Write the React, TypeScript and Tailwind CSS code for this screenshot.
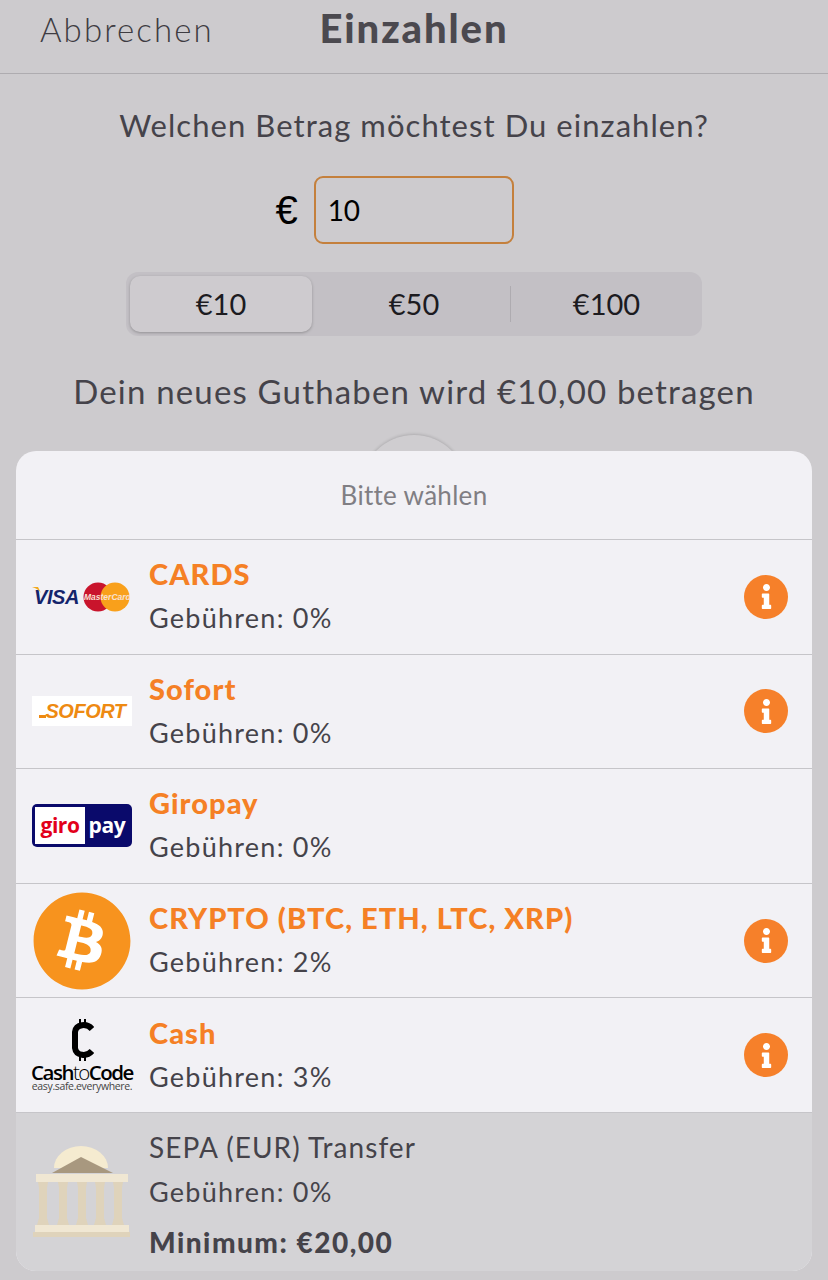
import { FaBitcoin, FaInfo } from "react-icons/fa";

const font = { fontFamily: "Lato, 'Noto Sans', sans-serif" };

const InfoButton = () => (
  <div className="w-[44px] h-[44px] rounded-full bg-[#f6802a] flex items-center justify-center shrink-0">
    <FaInfo size={25} color="#ffffff" />
  </div>
);

const CardsLogo = () => (
  <div className="flex items-center w-[100px] justify-center">
    <span className="relative font-['Liberation_Sans'] font-bold italic text-[20px] leading-none text-[#14246b] tracking-[-0.4px]">
      VISA
      <svg width="9" height="6" viewBox="0 0 9 6" className="absolute left-[-2px] top-[0px]">
        <path d="M0 0H6L9 6C7 3 4 1 0 0Z" fill="#f2a91c" />
      </svg>
    </span>
    <svg width="47" height="30" viewBox="0 0 47 30" className="ml-[4px]">
      <circle cx="15" cy="15" r="14.5" fill="#c9142c" />
      <circle cx="32" cy="15" r="14.5" fill="#f9a01b" />
      <text x="1" y="18" fontSize="8.5" fontStyle="italic" fontWeight="700" fill="#f9e0d0" fontFamily="Liberation Sans">MasterCard</text>
    </svg>
  </div>
);

const SofortLogo = () => (
  <div className="w-[100px] h-[30px] bg-white flex items-center justify-center">
    <div className="w-[7px] h-[3px] bg-[#ee8a12] self-end mb-[8px]" />
    <span className="font-['Liberation_Sans'] font-bold italic text-[20px] leading-none text-[#ee8a12] tracking-[-0.5px]">SOFORT</span>
  </div>
);

const GiropayLogo = () => (
  <div className="w-[100px] h-[43px] rounded-[5px] bg-[#0a0a6b] p-[3px] flex items-stretch">
    <div className="w-[50px] bg-white flex items-center justify-center">
      <span className="font-['Open_Sans'] font-bold text-[21px] leading-none text-[#e2001a] tracking-[-0.5px]">giro</span>
    </div>
    <div className="flex-1 flex items-center justify-center">
      <span className="font-['Open_Sans'] font-bold text-[21px] leading-none text-white tracking-[-0.3px]">pay</span>
    </div>
  </div>
);

const BitcoinLogo = () => (
  <div className="relative w-[100px] h-[100px]">
    <div className="absolute inset-[14px] rounded-full bg-white" />
    <FaBitcoin size={100} color="#f7931e" className="absolute inset-0" />
  </div>
);

const CashLogo = () => (
  <div className="w-[102px] flex flex-col items-center">
    <svg width="24" height="42" viewBox="0 0 24 42" className="mb-[2px]">
      <path d="M22 10C17 4 6 5 5 13V29C6 37 17 38 22 32" fill="none" stroke="#000" strokeWidth="6" />
      <path d="M10 0V6M15 0V6M10 36V42M15 36V42" stroke="#000" strokeWidth="2" />
    </svg>
    <div className="font-['Open_Sans'] text-[20.5px] h-[19px] leading-[19px] tracking-[-1.5px] text-black font-semibold whitespace-nowrap">
      Cash<span className="font-light">to</span>Code
    </div>
    <div className="font-['Open_Sans'] text-[10.5px] h-[9px] leading-[9px] tracking-[-0.35px] text-[#444] whitespace-nowrap">easy.safe.everywhere.</div>
  </div>
);

const BankLogo = () => (
  <svg width="98" height="92" viewBox="0 0 98 92">
    <path d="M21 22a27 22 0 0 1 54 0z" fill="#f5ebd0" />
    <path d="M19 27 48 11 80 27z" fill="#a8987f" />
    <rect x="3" y="28" width="92" height="8" fill="#f0e7d3" />
    {[10, 30, 49, 67, 85].map((x) => (
      <path key={x} d={`M${x - 5} 36h10l-1 6v30l2 7h-12l2-7V42z`} fill="#dfd3bb" />
    ))}
    <rect x="2" y="79" width="94" height="7" fill="#f0e7d3" />
    <rect x="0" y="86" width="97" height="5" fill="#dfd3bb" />
  </svg>
);

const methods = [
  { name: "CARDS", fee: "0%", logo: <CardsLogo />, info: true },
  { name: "Sofort", fee: "0%", logo: <SofortLogo />, info: true },
  { name: "Giropay", fee: "0%", logo: <GiropayLogo />, info: false },
  { name: "CRYPTO (BTC, ETH, LTC, XRP)", fee: "2%", logo: <BitcoinLogo />, info: true },
  { name: "Cash", fee: "3%", logo: <CashLogo />, info: true },
];

export default function App() {
  return (
    <div style={font} className="relative w-[828px] h-[1280px] overflow-hidden bg-[#cdcbce] text-[#45434a]">
      <div className="relative h-[74px] border-b border-[#aeacb0] flex items-center justify-center">
        <span className="absolute left-[40px] top-[9px] text-[33px] leading-[40px] font-light tracking-[2.1px] text-[#3e3c42]">Abbrechen</span>
        <span className="text-[40px] leading-[44px] font-black tracking-[1.9px] text-[#4b494f] -mt-[18px]">Einzahlen</span>
      </div>

      <div className="pt-[31px] text-center text-[31px] leading-[40px] tracking-[1.05px]">Welchen Betrag möchtest Du einzahlen?</div>

      <div className="mt-[31px] flex items-center justify-center">
        <span className="text-[40px] leading-none text-black mr-[16px] ml-[-39px] font-['Liberation_Sans']">€</span>
        <div className="w-[200px] h-[68px] rounded-[9px] border-2 border-[#c4803d] pl-[12px] flex items-center text-[28px] text-black">10</div>
      </div>

      <div className="mt-[28px] mx-auto w-[576px] h-[64px] rounded-[12px] bg-[#c3c0c5] flex items-center p-[4px] text-[29px] text-[#1c1b1f]">
        <div className="w-[182px] h-[56px] rounded-[10px] bg-[#cecbcf] shadow-[0_1px_3px_rgba(0,0,0,0.25)] flex items-center justify-center">€10</div>
        <div className="w-[198px] flex items-center justify-center pl-[6px]">€50</div>
        <div className="w-px h-[36px] bg-[#aeabb0]" />
        <div className="flex-1 flex items-center justify-center pl-[4px]">€100</div>
      </div>

      <div className="mt-[33px] text-center text-[33px] leading-[44px] tracking-[1.17px]">Dein neues Guthaben wird €10,00 betragen</div>

      {/* button hiding behind the sheet */}
      <div className="absolute left-[361px] top-[435px] w-[106px] h-[106px] rounded-full bg-[#cfcdd0] shadow-[0_-1px_3px_rgba(0,0,0,0.15)]" />

      <div className="absolute left-[16px] top-[451px] w-[796px] h-[820px] rounded-[20px] overflow-hidden bg-[#f2f1f5] flex flex-col">
        <div className="h-[89px] flex items-center justify-center text-[26px] tracking-[0.3px] text-[#807e83] border-b border-[#c6c5c9]">Bitte wählen</div>
        {methods.map((m) => (
          <div key={m.name} className="h-[114.6px] border-b border-[#c6c5c9] flex items-center pl-[16px] pr-[24px]">
            <div className="w-[100px] flex justify-center shrink-0">{m.logo}</div>
            <div className="ml-[17px] flex-1">
              <div className="text-[29px] leading-[36px] font-black tracking-[1.05px] text-[#f58025] -mt-[2px]">{m.name}</div>
              <div className="mt-[9px] text-[27px] leading-[34px] tracking-[1.25px]">Gebühren: {m.fee}</div>
            </div>
            {m.info && <InfoButton />}
          </div>
        ))}
        <div className="flex-1 bg-[#d4d3d6] flex items-center pl-[17px]">
          <BankLogo />
          <div className="ml-[18px] pt-[4px]">
            <div className="text-[28px] leading-[36px] tracking-[1.05px]">SEPA (EUR) Transfer</div>
            <div className="mt-[10px] text-[27px] leading-[34px] tracking-[1.25px]">Gebühren: 0%</div>
            <div className="mt-[16px] text-[28px] leading-[34px] font-black tracking-[1.5px]">Minimum: €20,00</div>
          </div>
        </div>
      </div>
    </div>
  );
}
